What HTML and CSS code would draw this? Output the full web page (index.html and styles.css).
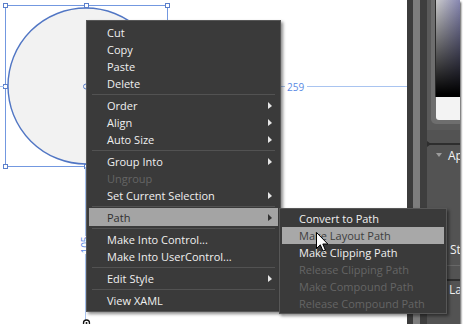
FILE: index.html
```html
<!DOCTYPE html>
<html>
<head>
<meta charset="utf-8">
<link rel="stylesheet" href="styles.css">
</head>
<body>
<div class="frame">
  <div class="canvas">
    <svg class="art" width="407" height="324" viewBox="0 0 407 324">
      <circle cx="86" cy="86" r="78" class="shape"/>
      <rect x="5.5" y="5.5" width="162" height="161" class="sel"/>
      <rect x="3.5" y="3.5" width="4" height="4" class="handle"/>
      <rect x="84.5" y="3.5" width="4" height="4" class="handle"/>
      <rect x="165.5" y="3.5" width="4" height="4" class="handle"/>
      <rect x="3.5" y="84.5" width="4" height="4" class="handle"/>
      <rect x="3.5" y="164.5" width="4" height="4" class="handle"/>
      <rect x="84.5" y="164.5" width="4" height="4" class="handle"/>
      <circle cx="86" cy="86.5" r="2.5" class="pivot"/>
      <line x1="0" y1="86.5" x2="4" y2="86.5" class="dimline"/>
      <line x1="281" y1="86.5" x2="285" y2="86.5" class="dimline"/>
      <text x="287" y="90.5" class="dim">259</text>
      <line x1="307" y1="86.5" x2="407" y2="86.5" class="dimline"/>
      <line x1="85.5" y1="167" x2="85.5" y2="236" class="dimline"/>
      <text transform="translate(88.5,245) rotate(-90)" text-anchor="middle" class="dim">105</text>
      <line x1="85.5" y1="254" x2="85.5" y2="320" class="dimline"/>
      <circle cx="86.5" cy="323" r="3" class="rot"/>
      <circle cx="86.5" cy="323" r="1" class="rotdot"/>
    </svg>
  </div>
  <div class="strip s1"></div>
  <div class="strip s2"></div>
  <div class="strip s3"></div>
  <div class="panel">
    <div class="picker-wrap">
      <div class="picker">
        <div class="grad"></div>
        <div class="swatch"></div>
      </div>
    </div>
    <div class="rule"></div>
    <div class="group"><span class="tri"></span><span>Appearance</span></div>
    <div class="prow st">Stroke</div>
    <div class="line-light"></div>
    <div class="rule dark2"></div>
    <div class="prow la">Layout</div>
  </div>

  <div class="menu main">
    <div class="item"><span class="label">Cut</span></div>
    <div class="item"><span class="label">Copy</span></div>
    <div class="item"><span class="label">Paste</span></div>
    <div class="item"><span class="label">Delete</span></div>
    <div class="sep"></div>
    <div class="item"><span class="label">Order</span><span class="arrow"></span></div>
    <div class="item"><span class="label">Align</span><span class="arrow"></span></div>
    <div class="item"><span class="label">Auto Size</span><span class="arrow"></span></div>
    <div class="sep"></div>
    <div class="item"><span class="label">Group Into</span><span class="arrow"></span></div>
    <div class="item disabled"><span class="label">Ungroup</span></div>
    <div class="item"><span class="label">Set Current Selection</span><span class="arrow"></span></div>
    <div class="sep tight"></div>
    <div class="item hot tall"><span class="label">Path</span><span class="arrow"></span></div>
    <div class="sep"></div>
    <div class="item"><span class="label">Make Into Control...</span></div>
    <div class="item"><span class="label">Make Into UserControl...</span></div>
    <div class="sep"></div>
    <div class="item"><span class="label">Edit Style</span><span class="arrow"></span></div>
    <div class="sep"></div>
    <div class="item"><span class="label">View XAML</span></div>
  </div>

  <div class="menu submenu">
    <div class="item"><span class="label">Convert to Path</span></div>
    <div class="item hot"><span class="label">Make Layout Path</span></div>
    <div class="item"><span class="label">Make Clipping Path</span></div>
    <div class="item disabled"><span class="label">Release Clipping Path</span></div>
    <div class="item disabled"><span class="label">Make Compound Path</span></div>
    <div class="item disabled"><span class="label">Release Compound Path</span></div>
  </div>

  <svg class="cursor" width="13" height="21" viewBox="0 0 13 21">
    <path d="M0.5 0.5 L0.5 16.5 L4.3 12.8 L7 19 L9.4 18 L6.8 12 L11.8 12 Z" fill="#fff" stroke="#000" stroke-width="1" stroke-linejoin="miter"/>
  </svg>
</div>
</body>
</html>
```

FILE: styles.css
```css
html, body {
  margin: 0;
  padding: 0;
  background: #ffffff;
  font-family: "Open Sans", "Noto Sans", sans-serif;
}

.frame {
  position: relative;
  width: 460px;
  height: 324px;
  display: flex;
  overflow: hidden;
  box-shadow: 1px 2px 2px rgba(0, 0, 0, 0.7);
}

.canvas {
  flex: none;
  width: 407px;
  background: #ffffff;
}

.art {
  display: block;
}

.shape {
  fill: #f2f2f2;
  stroke: #5176c4;
  stroke-width: 1.4;
}

.sel {
  fill: none;
  stroke: #7398e0;
  stroke-width: 1;
}

.handle {
  fill: #ffffff;
  stroke: #5b7fcb;
  stroke-width: 1;
}

.pivot {
  fill: none;
  stroke: #5b7fcb;
  stroke-width: 1;
}

.dimline {
  stroke: #a9c4f0;
  stroke-width: 1;
}

.dim {
  font-family: "Open Sans", sans-serif;
  font-size: 10px;
  fill: #5b8ae4;
}

.rot {
  fill: #ffffff;
  stroke: #111111;
  stroke-width: 1.3;
}

.rotdot {
  fill: #111111;
}

.strip {
  flex: none;
}

.s1 {
  width: 6px;
  background: #3c3c3c;
}

.s2 {
  width: 7px;
  background: #7d7d7d;
}

.s3 {
  width: 7px;
  background: #3e3e3e;
}

.panel {
  flex: 1;
  min-width: 0;
  background: #535353;
  display: flex;
  flex-direction: column;
  overflow: hidden;
  color: #f2f2f2;
  font-size: 12px;
  white-space: nowrap;
}

.picker-wrap {
  background: #5a5a5a;
  padding: 0 0 6px 4px;
}

.picker {
  background: #6e6e6e;
  padding: 0 0 4px 4px;
  border-bottom-left-radius: 5px;
}

.grad {
  height: 97px;
  border-left: 1px solid #2a2a2a;
  background:
    linear-gradient(to bottom, rgba(0, 0, 0, 0.04) 0%, #000000 97%),
    linear-gradient(to right, #d2d2d2, #8c8cb8);
}

.swatch {
  height: 23px;
  margin-left: 1px;
  background: #f3f3f3;
  border-bottom-left-radius: 3px;
}

.rule {
  position: relative;
  margin-top: 13px;
  height: 2px;
  background: #2e2e2e;
}

.rule::before {
  content: "";
  position: absolute;
  left: 0;
  top: -2px;
  border-left: 4px solid #2e2e2e;
  border-top: 3px solid transparent;
  border-bottom: 3px solid transparent;
}

.group {
  height: 20px;
  display: flex;
  align-items: center;
  padding-left: 9px;
  gap: 6px;
}

.tri {
  flex: none;
  width: 0;
  height: 0;
  border-top: 4px solid #9c9c9c;
  border-left: 3px solid transparent;
  border-right: 3px solid transparent;
}

.prow {
  height: 18px;
  line-height: 18px;
}

.st {
  margin-top: 76px;
  padding-left: 23px;
}

.line-light {
  margin-top: 6px;
  height: 1px;
  background: #686868;
}

.dark2 {
  margin-top: 13px;
}

.dark2::before {
  display: none;
}

.la {
  padding-left: 22px;
}

/* context menus */
.menu {
  position: absolute;
  box-sizing: border-box;
  background: #3a3a3a;
  border: 1px solid #575757;
  box-shadow: 2px 2px 3px rgba(0, 0, 0, 0.45);
  font-size: 11px;
  color: #f0f0f0;
  white-space: nowrap;
}

.main {
  left: 86px;
  top: 20px;
  width: 195px;
  padding: 3px 2px 2px;
}

.submenu {
  left: 279px;
  top: 208px;
  width: 168px;
  padding: 1px 2px;
}

.item {
  display: flex;
  align-items: center;
  height: 17px;
  padding-left: 18px;
  padding-right: 6px;
}

.submenu .item {
  padding-left: 17px;
}

.item.tall {
  height: 18px;
}

.label {
  flex: 1;
  line-height: 17px;
}

.item.disabled {
  color: #656565;
}

.item.hot {
  background: #a4a4a4;
  color: #303030;
}

.submenu .item.hot {
  background: #a8a8a8;
  color: #3e3e3e;
}

.arrow {
  flex: none;
  width: 0;
  height: 0;
  border-left: 4px solid #e6e6e6;
  border-top: 4px solid transparent;
  border-bottom: 3px solid transparent;
}

.item.hot .arrow {
  border-left-color: #333333;
}

.sep {
  margin: 2px 3px;
  height: 0;
  border-top: 1px solid #525252;
}

.sep.tight {
  margin-bottom: 1px;
}

.cursor {
  position: absolute;
  left: 316px;
  top: 232px;
}
```
